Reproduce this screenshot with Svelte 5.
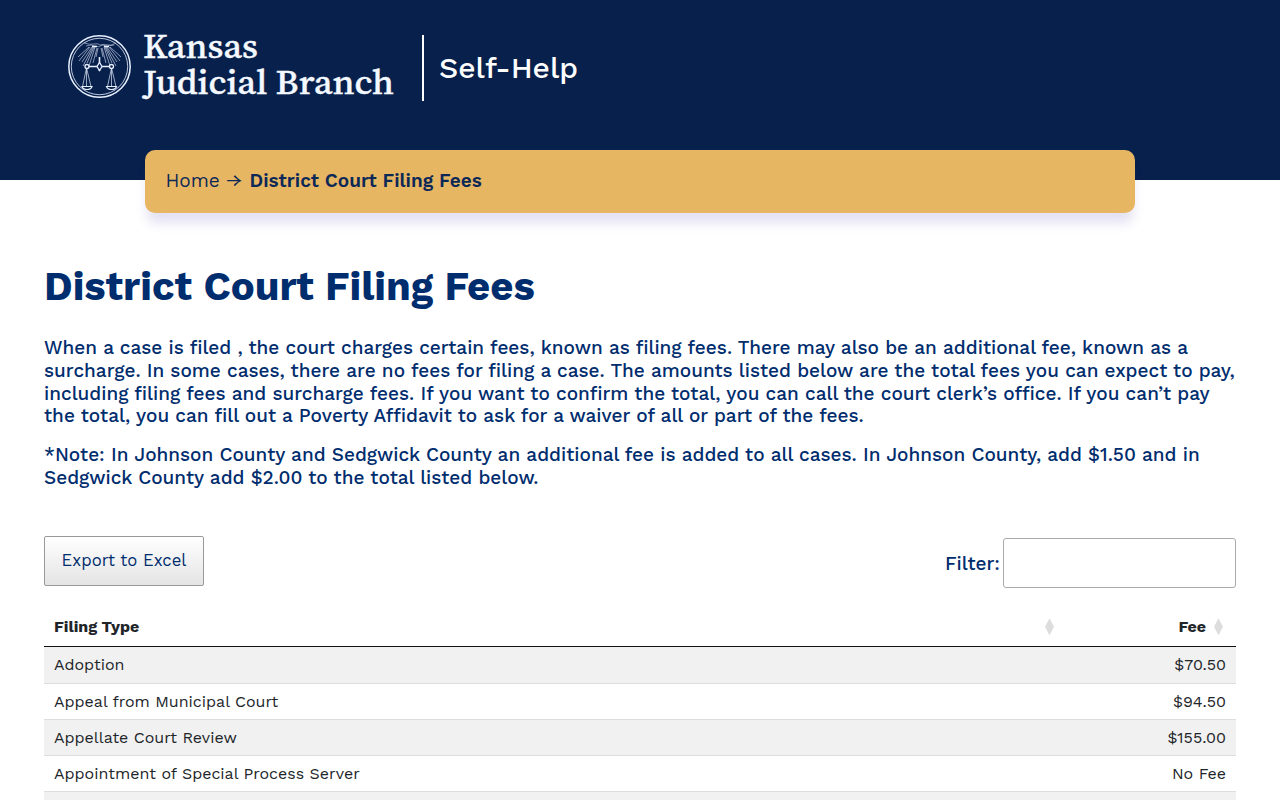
<script>
	let filter = $state('');

	const fees = [
		{ type: 'Adoption', fee: '$70.50' },
		{ type: 'Appeal from Municipal Court', fee: '$94.50' },
		{ type: 'Appellate Court Review', fee: '$155.00' },
		{ type: 'Appointment of Special Process Server', fee: 'No Fee' },
		{ type: '', fee: '' }
	];

	let rows = $derived(fees.filter((f) => f.type.toLowerCase().includes(filter.toLowerCase())));

	// sunburst lines in the seal
	const rays = [
		[22, 14, 11, 24], [23, 14, 12, 28], [25, 14, 15, 29], [26, 14, 16, 33], [27, 14, 20, 30], [28, 14, 22, 33], [30, 15, 26, 30], [31, 15, 29, 24],
		[34, 15, 36, 24], [35, 15, 39, 30], [37, 14, 43, 33], [38, 14, 45, 30], [39, 14, 49, 33], [40, 14, 50, 29], [42, 14, 53, 28], [43, 14, 54, 24]
	];
</script>

<header>
	<a class="logo" href="/" aria-label="Kansas Judicial Branch">
		<svg width="340" height="74" viewBox="0 0 340 74">
			<g fill="none" stroke="#e8f0ff">
				<circle cx="32.500" cy="33.500" r="30.700" stroke-width="1.500" />
				<circle cx="32.500" cy="33.500" r="28.200" stroke-width="0.800" />
				<path d="M17 10q6 2 10 1t6 1q4-1 8 0t8-2M19 13q5-2 9 0t7-1q4 2 12 0" stroke-width="1" opacity="0.500" />
				<path d="M25 13.500h5M37 13.500h5" stroke-width="1.500" />
				{#each rays as [x1, y1, x2, y2]}
					<line {x1} {y1} {x2} {y2} stroke-width="0.900" opacity="0.650" />
				{/each}
				<path d="M20 33.500h25M32.500 24v14" stroke-width="1.600" />
				<path d="M19.500 35l-4 18.500M19.500 35v18M19.500 35l4.500 18.500M44.500 35l-4 18.500M44.500 35v18M44.500 35l4.500 18.500" stroke-width="0.900" opacity="0.750" />
				<path d="M15 53.500h10q-1 3-5 3t-5-3zM39.500 53.500h10q-1 3-5 3t-5-3z" stroke-width="1.200" />
				<circle cx="20" cy="33.500" r="2" stroke-width="1.300" fill="#08204c" />
				<circle cx="44.500" cy="33.500" r="2" stroke-width="1.300" fill="#08204c" />
				<path d="M32.500 29.500l2.500 4-2.500 4-2.500-4z" stroke-width="1.300" fill="#08204c" />
			</g>
			<g class="wordmark">
				<text x="76" y="24.500" textLength="115" lengthAdjust="spacingAndGlyphs">Kansas</text>
				<text x="76" y="61" textLength="251" lengthAdjust="spacingAndGlyphs">Judicial Branch</text>
			</g>
		</svg>
	</a>
	<span class="site">Self-Help</span>
</header>

<nav>
	<a href="/">Home</a>
	<span class="arrow">→</span>
	<strong>District Court Filing Fees</strong>
</nav>

<main>
	<h1>District Court Filing Fees</h1>
	<p>
		When a case is filed , the court charges certain fees, known as filing fees. There may also be an additional fee, known as a
		surcharge. In some cases, there are no fees for filing a case. The amounts listed below are the total fees you can expect to pay,
		including filing fees and surcharge fees. If you want to confirm the total, you can call the court clerk’s office. If you can’t pay
		the total, you can fill out a Poverty Affidavit to ask for a waiver of all or part of the fees.
	</p>
	<p>
		*Note: In Johnson County and Sedgwick County an additional fee is added to all cases. In Johnson County, add $1.50 and in
		Sedgwick County add $2.00 to the total listed below.
	</p>

	<div class="toolbar">
		<button>Export to Excel</button>
		<label><span>Filter:</span><input type="search" bind:value={filter} /></label>
	</div>

	<table>
		<thead>
			<tr>
				<th><div><span>Filing Type</span><i class="sort"></i></div></th>
				<th class="fee"><div><span>Fee</span><i class="sort"></i></div></th>
			</tr>
		</thead>
		<tbody>
			{#each rows as row}
				<tr>
					<td>{row.type}</td>
					<td class="fee">{row.fee}</td>
				</tr>
			{/each}
		</tbody>
	</table>
</main>

<style>
	:global(body) {
		height: 800px;
		overflow: hidden;
		background: #fff;
		color: #002d6e;
		font-family: 'Work Sans', Inter, sans-serif;
	}

	header {
		box-sizing: border-box;
		height: 180px;
		padding: 33px 0 0 67px;
		display: flex;
		align-items: flex-start;
		background: #08204c;
	}

	.logo {
		display: flex;
		width: 355px;
		height: 74px;
	}

	.logo svg {
		overflow: visible;
	}

	.wordmark {
		font-family: 'Source Serif 4', 'Source Serif Pro', 'Noto Serif', 'Liberation Serif', serif;
		font-size: 35px;
		font-weight: 500;
		fill: #f4f8ff;
		stroke: #f4f8ff;
		stroke-width: 0.400px;
	}

	.site {
		height: 66px;
		margin-top: 2px;
		padding-left: 15px;
		border-left: 2px solid #fff;
		color: #fff;
		font-size: 30px;
		font-weight: 500;
		line-height: 66px;
	}

	nav {
		position: relative;
		box-sizing: border-box;
		width: 990px;
		height: 63px;
		margin: -30px auto 0;
		padding: 0 20px 2px 20.500px;
		display: flex;
		align-items: center;
		border-radius: 10px;
		background: #e7b663;
		box-shadow: 0 12px 12px -2px rgba(60, 40, 160, 0.14);
		color: #0c2857;
		font-size: 19px;
	}

	.arrow {
		margin: 0 9px 0 6.500px;
		transform: scale(1.120, 0.850);
		transform-origin: 0 60%;
	}

	nav a {
		color: inherit;
		text-decoration: none;
	}

	nav strong {
		font-weight: 600;
	}

	main {
		padding: 50px 44px 0;
	}

	h1 {
		margin: 0 0 27px;
		font-size: 40px;
		font-weight: 700;
		line-height: 47px;
	}

	p {
		margin: 0 0 16px;
		font-size: 19px;
		font-weight: 500;
		line-height: 22.800px;
	}

	.toolbar {
		display: flex;
		justify-content: space-between;
		margin-top: 46px;
		height: 72px;
	}

	button {
		box-sizing: border-box;
		width: 160px;
		height: 50px;
		padding: 0 0 1px;
		border: 1px solid #999;
		border-radius: 2px;
		background: linear-gradient(#fff, #e4e4e4);
		color: #002d6e;
		font: 400 16.720px 'Work Sans', Inter, sans-serif;
	}

	label {
		display: flex;
		height: 50px;
		margin-top: 2px;
		gap: 3px;
		font-size: 19px;
		font-weight: 500;
		line-height: 52px;
	}

	input {
		box-sizing: border-box;
		width: 233px;
		height: 50px;
		border: 1px solid #aaa;
		border-radius: 3px;
		background: #fff;
	}

	table {
		width: 100%;
		border-collapse: separate;
		border-spacing: 0;
		color: #212529;
		font-size: 16px;
	}

	th {
		height: 38px;
		padding: 0 10px;
		border-bottom: 1px solid #111;
		font-weight: 700;
	}

	th:first-child {
		width: 1000px;
	}

	th div {
		display: flex;
		align-items: center;
		justify-content: space-between;
	}

	th.fee div {
		justify-content: flex-end;
		gap: 8px;
		margin-right: 3px;
	}

	.sort {
		width: 9px;
		height: 17px;
		background: #ddd;
		clip-path: polygon(50% 0, 100% 50%, 50% 100%, 0 50%);
	}

	td {
		height: 35.200px;
		padding: 0 10px;
		border-bottom: 1px solid #ddd;
	}

	tbody tr:first-child td {
		height: 36px;
	}

	tbody tr:nth-child(odd) {
		background: #f1f1f1;
	}

	td.fee {
		text-align: right;
	}
</style>
